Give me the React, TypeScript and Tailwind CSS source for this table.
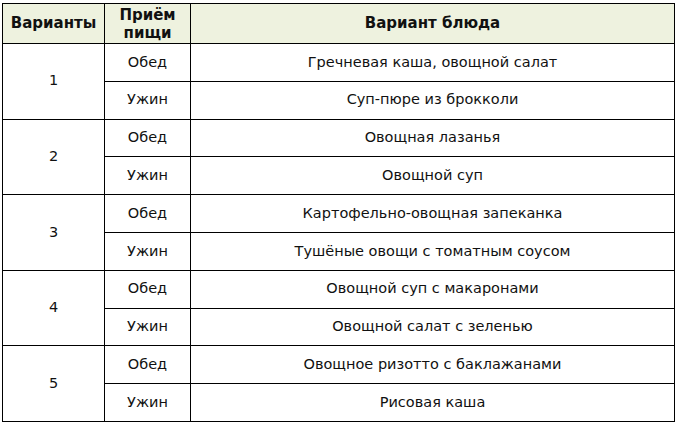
import React from 'react';

const menu = [
  { n: '1', lunch: 'Гречневая каша, овощной салат', dinner: 'Суп-пюре из брокколи' },
  { n: '2', lunch: 'Овощная лазанья', dinner: 'Овощной суп' },
  { n: '3', lunch: 'Картофельно-овощная запеканка', dinner: 'Тушёные овощи с томатным соусом' },
  { n: '4', lunch: 'Овощной суп с макаронами', dinner: 'Овощной салат с зеленью' },
  { n: '5', lunch: 'Овощное ризотто с баклажанами', dinner: 'Рисовая каша' },
];

const cell = 'border border-black text-center align-middle p-0';

export default function App() {
  return (
    <div className="w-[680px] h-[424px] bg-white pt-[3px] pl-[2px] text-[14.5px] text-[#111] font-['DejaVu_Sans',Verdana,sans-serif]">
      <table className="border-collapse table-fixed w-[673px]">
        <colgroup>
          <col className="w-[102px]" />
          <col className="w-[86px]" />
          <col />
        </colgroup>
        <thead>
          <tr className="h-[40px] bg-[#eef2df] font-bold text-[15px]">
            <th className={cell}>Варианты</th>
            <th className={`${cell} leading-[18px]`}>
              Приём
              <br />
              пищи
            </th>
            <th className={cell}>Вариант блюда</th>
          </tr>
        </thead>
        <tbody>
          {menu.map((m) => (
            <React.Fragment key={m.n}>
              <tr className="h-[37.8px]">
                <td rowSpan={2} className={cell}>
                  {m.n}
                </td>
                <td className={cell}>Обед</td>
                <td className={cell}>{m.lunch}</td>
              </tr>
              <tr className="h-[37.8px]">
                <td className={cell}>Ужин</td>
                <td className={cell}>{m.dinner}</td>
              </tr>
            </React.Fragment>
          ))}
        </tbody>
      </table>
    </div>
  );
}
